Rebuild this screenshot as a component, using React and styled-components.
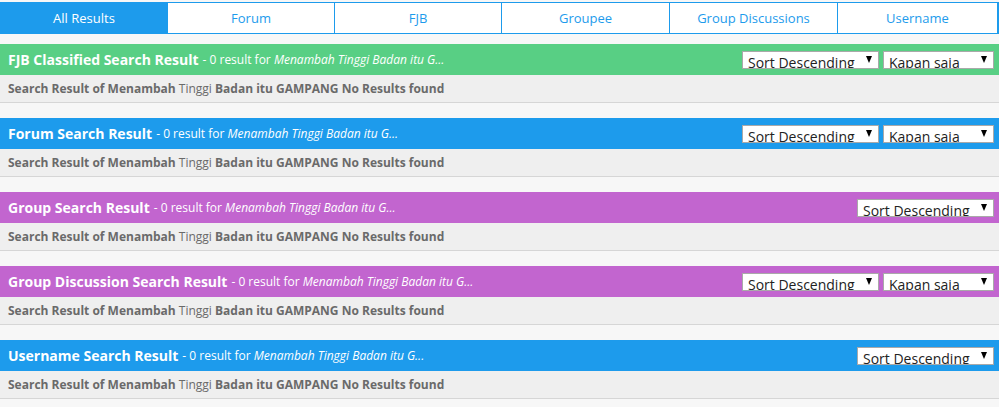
import React from 'react';
import styled, { createGlobalStyle } from 'styled-components';

const GlobalStyle = createGlobalStyle`
  body {
    margin: 0;
    background: #f7f7f7;
    font-family: "Open Sans", "Liberation Sans", sans-serif;
  }
`;

const colors = {
  blue: '#1d9bec',
  green: '#58cf84',
  purple: '#c265cf',
};

const Page = styled.div`
  padding-top: 2px;
`;

const TabBar = styled.ul`
  list-style: none;
  margin: 0;
  padding: 0;
  display: grid;
  grid-template-columns: 166px 167px 167px 168px 168px 1fr;
  border: 1px solid ${colors.blue};
  border-right-width: 2px;
  background: #fff;
`;

const Tab = styled.li`
  height: 30px;
  line-height: 30px;
  text-align: center;
  font-size: 13px;
  color: ${(p) => (p.active ? '#fff' : colors.blue)};
  background: ${(p) => (p.active ? colors.blue : '#fff')};
  border-left: 1px solid ${colors.blue};

  &:first-child {
    border-left: none;
  }
`;

const Sections = styled.div`
  display: flex;
  flex-direction: column;
  gap: 15px;
  margin-top: 10px;
`;

const Header = styled.div`
  height: 31px;
  display: flex;
  align-items: center;
  padding: 0 5px 0 8px;
  background: ${(p) => p.color};
  color: #fff;
  white-space: nowrap;
`;

const Title = styled.span`
  font-size: 14px;
  font-weight: 700;
`;

const Meta = styled.span`
  font-size: 12px;
  margin-left: 4px;

  em {
    font-style: italic;
  }
`;

const Controls = styled.div`
  margin-left: auto;
  display: flex;
  gap: 4px;
`;

const SelectBox = styled.div`
  box-sizing: border-box;
  width: ${(p) => p.width}px;
  height: 18px;
  border: 1px solid #a9a9a9;
  background: #fff;
  color: #222;
  font-size: 14px;
  line-height: 21px;
  padding: 0 6px 0 5px;
  display: flex;
  justify-content: space-between;
  overflow: hidden;
`;

const Arrow = styled.svg`
  flex: none;
  margin-top: 4px;
`;

const Body = styled.div`
  height: 27px;
  line-height: 27px;
  padding-left: 8px;
  background: #efefef;
  border-bottom: 1px solid #d6d6d6;
  font-size: 12px;
  font-weight: 700;
  color: #6a6a6a;
  white-space: nowrap;
`;

const Light = styled.span`
  font-weight: 400;
`;

const Select = ({ label, width }) => (
  <SelectBox width={width}>
    <span>{label}</span>
    <Arrow width="6" height="7" viewBox="0 0 6 7">
      <path d="M0 0H6L3 7Z" fill="#000" />
    </Arrow>
  </SelectBox>
);

const tabs = ['All Results', 'Forum', 'FJB', 'Groupee', 'Group Discussions', 'Username'];

const sections = [
  { title: 'FJB Classified Search Result', color: colors.green, period: true },
  { title: 'Forum Search Result', color: colors.blue, period: true },
  { title: 'Group Search Result', color: colors.purple, period: false },
  { title: 'Group Discussion Search Result', color: colors.purple, period: true },
  { title: 'Username Search Result', color: colors.blue, period: false },
];

export default function App() {
  return (
    <Page>
      <GlobalStyle />
      <TabBar>
        {tabs.map((t, i) => (
          <Tab key={t} active={i === 0}>{t}</Tab>
        ))}
      </TabBar>
      <Sections>
        {sections.map((s) => (
          <section key={s.title}>
            <Header color={s.color}>
              <Title>{s.title}</Title>
              <Meta>
                - 0 result for <em>Menambah Tinggi Badan itu G...</em>
              </Meta>
              <Controls>
                <Select label="Sort Descending" width={137} />
                {s.period && <Select label="Kapan saja" width={111} />}
              </Controls>
            </Header>
            <Body>
              Search Result of Menambah <Light>Tinggi</Light> Badan itu GAMPANG No Results found
            </Body>
          </section>
        ))}
      </Sections>
    </Page>
  );
}
